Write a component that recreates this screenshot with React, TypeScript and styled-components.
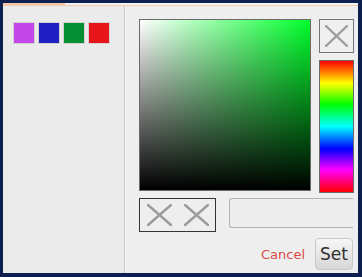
import styled, { createGlobalStyle } from 'styled-components';

const GlobalStyle = createGlobalStyle`
  html, body {
    margin: 0;
    padding: 0;
    background: #0c1f4f;
    overflow: hidden;
  }
  body {
    font-family: 'DejaVu Sans', 'Liberation Sans', sans-serif;
  }
`;

const SWATCHES = ['#c447ea', '#1e20c4', '#058f33', '#e8161a'];

const Frame = styled.div`
  width: 362px;
  height: 277px;
  box-sizing: border-box;
  padding: 3px 4px 4px 3px;
  background: #0c1f4f;
  display: flex;
  flex-direction: column;
  overflow: hidden;
`;

const TabStrip = styled.div`
  flex-shrink: 0;
  height: 3px;
  display: flex;
  background: #f4f4f4;
  border-bottom: 1px solid #f3cdb2;
  box-sizing: border-box;
`;

const ActiveTab = styled.div`
  width: 62px;
  height: 2px;
  background: #f4c3a0;
`;

const Body = styled.div`
  flex: 1;
  display: flex;
  min-height: 0;
  overflow: hidden;
`;

const Sidebar = styled.aside`
  flex-shrink: 0;
  width: 122px;
  background: #ebebeb;
  border-right: 1px solid #c6c6c6;
  padding: 16px 0 0 10px;
  box-sizing: border-box;
  display: flex;
  gap: 3px;
  align-items: flex-start;
`;

const Swatch = styled.div<{ $color: string }>`
  width: 22px;
  height: 22px;
  box-sizing: border-box;
  border: 1px solid #d2d2d2;
  background: ${(p) => p.$color};
`;

const Editor = styled.section`
  flex: 1;
  min-width: 0;
  background: #eeeeee;
  border-left: 1px solid #f7f7f7;
  padding: 13px 4px 0 13px;
  display: flex;
  flex-direction: column;
`;

const TopRow = styled.div`
  display: flex;
  gap: 8px;
  height: 174px;
`;

const SatValBox = styled.div`
  width: 172px;
  height: 172px;
  box-sizing: border-box;
  border: 1px solid #6a6a6a;
  background: linear-gradient(to top, #000 0%, rgba(0, 0, 0, 0) 100%),
    linear-gradient(to right, #ffffff 0%, #00ff2b 100%);
`;

const SideColumn = styled.div`
  width: 35px;
  display: flex;
  flex-direction: column;
  gap: 7px;
`;

const ClearButton = styled.button`
  width: 35px;
  height: 34px;
  padding: 0;
  box-sizing: border-box;
  border: 1px solid #747474;
  background: #efefef;
  display: flex;
  align-items: center;
  justify-content: center;
`;

const HueBar = styled.div`
  flex: 1;
  box-sizing: border-box;
  border: 1px solid #6a6a6a;
  background: linear-gradient(
    to bottom,
    #ff0000 0%,
    #ffff00 17%,
    #00ff00 33%,
    #00ffff 50%,
    #0000ff 67%,
    #ff00ff 83%,
    #ff0000 100%
  );
`;

const InputRow = styled.div`
  display: flex;
  align-items: flex-start;
  gap: 13px;
  margin-top: 5px;
`;

const PreviewBox = styled.div`
  flex-shrink: 0;
  width: 77px;
  height: 34px;
  box-sizing: border-box;
  border: 1px solid #333333;
  display: flex;
  align-items: center;
  gap: 12px;
  padding-left: 7px;
`;

const HexInput = styled.input`
  flex: 1;
  min-width: 0;
  width: 0;
  height: 30px;
  margin: 0 1px 0 0;
  box-sizing: border-box;
  border: 1px solid #b4b4b4;
  border-right: none;
  border-radius: 3px 0 0 3px;
  background: #ededed;
  outline: none;
`;

const ActionRow = styled.div`
  display: flex;
  justify-content: flex-end;
  align-items: center;
  gap: 10px;
  margin-top: 6px;
  padding-right: 1px;
`;

const CancelLink = styled.span`
  color: #d94a45;
  font-family: 'DejaVu Sans', sans-serif;
  font-size: 13px;
`;

const SetButton = styled.button`
  width: 38px;
  height: 32px;
  padding: 0;
  border: 1px solid #c9c9c9;
  border-radius: 4px;
  background: linear-gradient(to bottom, #f6f6f6, #d6d6d6);
  color: #2e2e2e;
  font-family: 'DejaVu Sans', sans-serif;
  font-size: 17px;
`;

function Cross({ w, h }: { w: number; h: number }) {
  return (
    <svg width={w} height={h} viewBox={`0 0 ${w} ${h}`}>
      <path
        d={`M1 1 L${w - 1} ${h - 1} M${w - 1} 1 L1 ${h - 1}`}
        stroke="#9b9b9b"
        strokeWidth="2.4"
        strokeLinecap="round"
        fill="none"
      />
    </svg>
  );
}

export default function App() {
  return (
    <>
      <GlobalStyle />
      <Frame>
        <TabStrip>
          <ActiveTab />
        </TabStrip>
        <Body>
          <Sidebar>
            {SWATCHES.map((c) => (
              <Swatch key={c} $color={c} />
            ))}
          </Sidebar>
          <Editor>
            <TopRow>
              <SatValBox />
              <SideColumn>
                <ClearButton>
                  <Cross w={23} h={22} />
                </ClearButton>
                <HueBar />
              </SideColumn>
            </TopRow>
            <InputRow>
              <PreviewBox>
                <Cross w={25} h={22} />
                <Cross w={25} h={22} />
              </PreviewBox>
              <HexInput />
            </InputRow>
            <ActionRow>
              <CancelLink>Cancel</CancelLink>
              <SetButton>Set</SetButton>
            </ActionRow>
          </Editor>
        </Body>
      </Frame>
    </>
  );
}
